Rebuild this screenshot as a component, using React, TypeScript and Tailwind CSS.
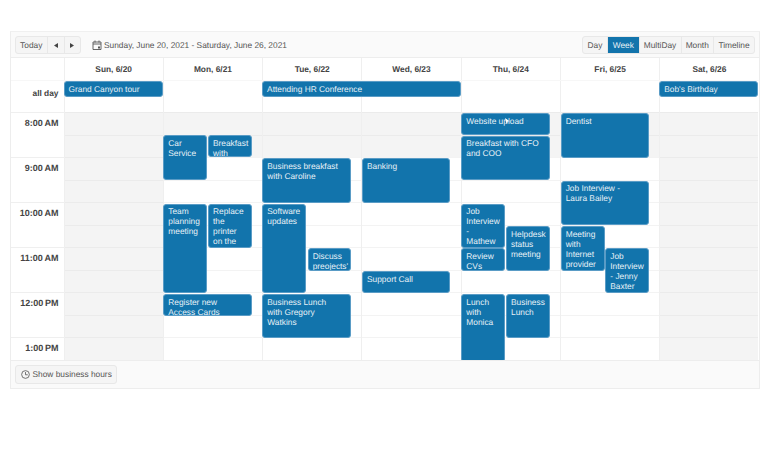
import React from "react";

const GRID_TOP = 112;
const GRID_LEFT = 11;

type Ev = { t: string; x1: number; x2: number; y1: number; y2: number };

const events: Ev[] = [
  { t: "Car\nService", x1: 163.3, x2: 207, y1: 135.3, y2: 180.3 },
  { t: "Breakfast\nwith", x1: 208, x2: 252, y1: 135.3, y2: 157.5 },
  { t: "Business breakfast\nwith Caroline", x1: 262.3, x2: 351.3, y1: 158.3, y2: 202.7 },
  { t: "Banking", x1: 362, x2: 450.3, y1: 158.3, y2: 202.7 },
  { t: "Website upload", x1: 461.3, x2: 550, y1: 113, y2: 135 },
  { t: "Breakfast with CFO\nand COO", x1: 461.3, x2: 550, y1: 135.5, y2: 180.3 },
  { t: "Dentist", x1: 560.7, x2: 649.3, y1: 113, y2: 157.5 },
  { t: "Job Interview -\nLaura Bailey", x1: 560.7, x2: 649.3, y1: 180.7, y2: 225 },
  { t: "Team\nplanning\nmeeting", x1: 163.3, x2: 207, y1: 203.5, y2: 293 },
  { t: "Replace\nthe\nprinter\non the", x1: 208, x2: 252, y1: 203.5, y2: 247.7 },
  { t: "Software\nupdates", x1: 262.3, x2: 306.3, y1: 203.5, y2: 293 },
  { t: "Discuss\npreojects'", x1: 307.7, x2: 351.3, y1: 248.3, y2: 270.7 },
  { t: "Support Call", x1: 362, x2: 450.3, y1: 271, y2: 293 },
  { t: "Register new\nAccess Cards", x1: 163.3, x2: 252, y1: 294, y2: 316 },
  { t: "Business Lunch\nwith Gregory\nWatkins", x1: 262.3, x2: 351.3, y1: 294, y2: 338.3 },
  { t: "Job\nInterview\n-\nMathew", x1: 461.3, x2: 505.3, y1: 203.5, y2: 248 },
  { t: "Helpdesk\nstatus\nmeeting", x1: 506, x2: 550, y1: 226, y2: 270.7 },
  { t: "Review\nCVs", x1: 461.3, x2: 505.3, y1: 248.3, y2: 270.7 },
  { t: "Lunch\nwith\nMonica", x1: 461.3, x2: 505.3, y1: 294, y2: 362 },
  { t: "Business\nLunch", x1: 506, x2: 550, y1: 294, y2: 338.3 },
  { t: "Meeting\nwith\nInternet\nprovider", x1: 560.7, x2: 604.7, y1: 226, y2: 270.7 },
  { t: "Job\nInterview\n- Jenny\nBaxter", x1: 605.3, x2: 649.3, y1: 248.3, y2: 293 },
];

const days = ["Sun, 6/20", "Mon, 6/21", "Tue, 6/22", "Wed, 6/23", "Thu, 6/24", "Fri, 6/25", "Sat, 6/26"];
const times = ["8:00 AM", "", "9:00 AM", "", "10:00 AM", "", "11:00 AM", "", "12:00 PM", "", "1:00 PM"];
const views = [
  { l: "Day", w: "w-[24px]" },
  { l: "Week", w: "w-[31.5px]" },
  { l: "MultiDay", w: "w-[42px]" },
  { l: "Month", w: "w-[32.5px]" },
  { l: "Timeline", w: "w-[41px]" },
];
const slots = Array.from({ length: 11 }, (_, i) => i);

function isGray(day: number, slot: number) {
  return day === 0 || day === 6 || slot < 2;
}

function AllDay({ t, cls }: { t: string; cls: string }) {
  return (
    <div className={`${cls} h-[15.5px] mt-[0.3px] rounded-[3px] border border-[#5a9cc6] bg-[#1274ac] pl-[4px] text-[8.35px] leading-[14px] text-[#e6f0f6] whitespace-nowrap overflow-hidden`}>
      {t}
    </div>
  );
}

export default function App() {
  return (
    <div className="h-[449px] w-[770px] bg-white pt-[31px] pl-[10px] text-[8.35px] text-[#424242] [font-family:'Liberation_Sans',Arial,sans-serif] [text-rendering:geometricPrecision] overflow-hidden">
      <div className="w-[749.5px] border border-[#ededed] border-t-[#f0f0f0]">
        {/* Toolbar */}
        <div className="flex h-[26px] items-center justify-between bg-[#fafafa] pt-[1px] pl-[3.5px] pr-[3.5px] border-b border-[#ededed]">
          <div className="flex items-center">
            <div className="flex h-[18px] items-stretch rounded-[3px] border border-[#e8e8e8] bg-[#f5f5f5] text-[#555]">
              <div className="flex w-[31.5px] items-center justify-center">Today</div>
              <div className="flex w-[16.5px] items-center justify-center border-l border-[#e8e8e8]">
                <svg width="4" height="5" viewBox="0 0 4 5"><path d="M4 0v5L0 2.5z" fill="#444" /></svg>
              </div>
              <div className="flex w-[16.5px] items-center justify-center border-l border-[#e8e8e8]">
                <svg width="4" height="5" viewBox="0 0 4 5"><path d="M0 0v5l4-2.5z" fill="#444" /></svg>
              </div>
            </div>
            <svg className="ml-[10.5px]" width="10" height="10" viewBox="0 0 10 10" fill="none" stroke="#555" strokeWidth="0.9">
              <path d="M1 2h8v7.5H1zM1 4h8M3 .5V2.5M7 .5V2.5" />
              <rect x="6" y="6.5" width="2" height="2" fill="#555" stroke="none" />
            </svg>
            <span className="ml-[2.5px] text-[#555] whitespace-nowrap">Sunday, June 20, 2021 - Saturday, June 26, 2021</span>
          </div>
          <div className="flex h-[18px] items-stretch rounded-[3px] border border-[#e8e8e8] bg-[#f5f5f5] text-[#555]">
            {views.map((v, i) => (
              <div
                key={v.l}
                className={`flex ${v.w} items-center justify-center ${i > 0 ? "border-l border-[#e8e8e8]" : ""} ${v.l === "Week" ? "bg-[#1274ac] text-[#e6f0f6] border-[#1274ac]" : ""}`}
              >
                {v.l}
              </div>
            ))}
          </div>
        </div>

        {/* Header */}
        <div className="grid h-[23px] grid-cols-[52.5px_repeat(7,1fr)] border-b border-[#f7f7f7]">
          <div />
          {days.map((d) => (
            <div key={d} className="flex items-center justify-center border-l border-[#efefef] pt-[1px] font-bold text-[#444]">
              {d}
            </div>
          ))}
        </div>

        {/* All day */}
        <div className="relative grid h-[31px] grid-cols-[52.5px_repeat(7,1fr)]">
          <div className="pt-[6px] pr-[5px] text-right font-bold text-[#444]">all day</div>
          {days.map((d) => (
            <div key={d} className="border-l border-[#efefef]" />
          ))}
          <div className="absolute inset-y-0 left-[52.5px] right-0 grid grid-cols-7 content-start">
            <AllDay t="Grand Canyon tour" cls="col-start-1 col-span-1" />
            <AllDay t="Attending HR Conference" cls="col-start-3 col-span-2" />
            <AllDay t="Bob's Birthday" cls="col-start-7 col-span-1" />
          </div>
        </div>

        {/* Time grid */}
        <div className="relative h-[247.5px] overflow-hidden">
          <div className="grid h-full grid-cols-[52.5px_repeat(7,1fr)]">
            <div className="flex flex-col">
              {times.map((t, i) => (
                <div
                  key={i}
                  className={`h-[22.5px] shrink-0 pt-[4px] pr-[5px] text-right text-[9px] font-bold text-[#444] whitespace-nowrap ${i % 2 === 0 ? "border-t border-[#efefef]" : ""}`}
                >
                  {t.replace(" ", "\u2009")}
                </div>
              ))}
            </div>
            {days.map((d, day) => (
              <div key={d} className="flex flex-col border-l border-[#efefef]">
                {slots.map((s) => (
                  <div
                    key={s}
                    className={`h-[22.5px] shrink-0 border-t ${isGray(day, s) ? "bg-[#f4f4f4] border-[#ebebeb]" : "bg-white border-[#f3f3f3]"}`}
                  />
                ))}
              </div>
            ))}
          </div>
          {events.map((e) => (
            <div
              key={e.t}
              className="absolute overflow-hidden rounded-[3px] border border-[#5a9cc6] bg-[#1274ac] pl-[4px] pt-[1.5px] text-[8.35px] leading-[10px] text-[#e6f0f6] whitespace-pre-line"
              style={{
                left: e.x1 - GRID_LEFT,
                width: e.x2 - e.x1,
                top: e.y1 - GRID_TOP,
                height: e.y2 - e.y1,
              }}
            >
              {e.t}
            </div>
          ))}
          <svg className="absolute left-[493.5px] top-[6px]" width="5" height="6" viewBox="0 0 5 6">
            <path d="M0 0l4.5 3.2-2 .2-1.2 2z" fill="#fff" />
          </svg>
        </div>

        {/* Footer */}
        <div className="flex h-[28px] items-center border-t border-[#ededed] bg-[#fafafa] pl-[3.5px]">
          <div className="flex h-[19px] w-[102px] items-center gap-[3px] rounded-[3px] border border-[#e8e8e8] bg-[#f5f5f5] pl-[5px] text-[#555]">
            <svg width="9" height="9" viewBox="0 0 10 10" fill="none" stroke="#555" strokeWidth="0.9">
              <circle cx="5" cy="5" r="4.3" />
              <path d="M5 2.3V5.3H7.5" />
            </svg>
            <span className="whitespace-nowrap">Show business hours</span>
          </div>
        </div>
      </div>
    </div>
  );
}
